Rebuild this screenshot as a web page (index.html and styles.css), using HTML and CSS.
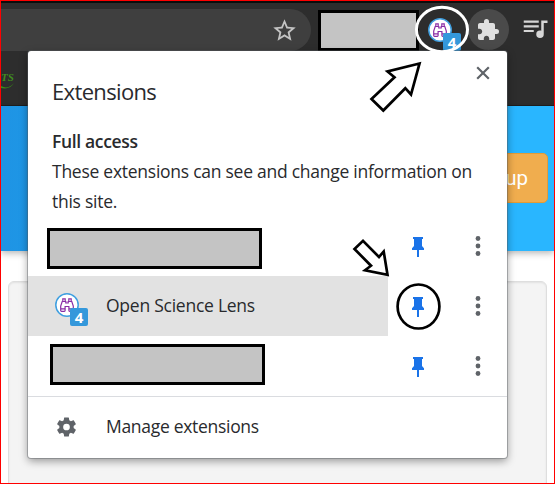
FILE: index.html
```html
<!DOCTYPE html>
<html lang="en">
<head>
<meta charset="utf-8">
<title>Extensions</title>
<link rel="stylesheet" href="styles.css">
</head>
<body>
<svg class="defs" aria-hidden="true">
  <symbol id="pin" viewBox="0 0 12 20"><path d="M1 0h10v2h-1v7l2 2.200V13H7v7H5v-7H0v-1.800L2 9V2H1z"/></symbol>
  <symbol id="dots" viewBox="0 0 6 20"><circle cx="3" cy="2.500" r="2.400"/><circle cx="3" cy="10" r="2.400"/><circle cx="3" cy="17.500" r="2.400"/></symbol>
  <symbol id="lens" viewBox="0 0 24 24">
    <circle cx="12" cy="12" r="11.200" fill="#fff" stroke="#3f9fe0" stroke-width="1.500"/>
    <path d="M7.800 8V5.800h2.400V8M13.800 8V5.800h2.400V8M7.200 8.500h3.600v1.500h2.400V8.500h3.600l1.500 4.500v4.500q0 .8-.8.8h-2.800q-.8 0-.8-.8v-4h-3.800v4q0 .8-.8.8H6.500q-.8 0-.8-.8V13zM6 15.800h4M14 15.800h4" fill="none" stroke="#8a2da5" stroke-width="1.200"/>
  </symbol>
</svg>
<div class="window">
  <header class="toolbar">
    <div class="omnibox">
      <svg class="star" viewBox="0 0 24 24"><path d="M22 9.240l-7.190-.62L12 2 9.190 8.630 2 9.240l5.460 4.730L5.820 21 12 17.270 18.180 21l-1.630-7.030L22 9.240zM12 15.400l-3.760 2.270 1-4.280-3.320-2.880 4.380-.38L12 6.100l1.710 4.040 4.380.38-3.320 2.880 1 4.280L12 15.400z"/></svg>
    </div>
    <div class="redacted redacted-top"></div>
    <div class="ext-icon ext-top"><svg><use href="#lens"/></svg><span class="badge">4</span></div>
    <div class="puzzle"><svg viewBox="0 0 24 24"><path d="M20.500 11H19V7c0-1.100-.9-2-2-2h-4V3.500a2.500 2.500 0 0 0-5 0V5H4c-1.100 0-1.990.9-1.990 2v3.800H3.500c1.490 0 2.700 1.210 2.700 2.700s-1.210 2.700-2.700 2.700H2V20c0 1.100.9 2 2 2h3.800v-1.500c0-1.490 1.210-2.700 2.700-2.700s2.700 1.210 2.700 2.700V22H17c1.100 0 2-.9 2-2v-4h1.500a2.500 2.500 0 0 0 0-5z"/></svg></div>
    <svg class="queue" viewBox="0 0 24 24"><path d="M15 6H3v1.700h12V6zm0 3.800H3v1.700h12V9.800zM3 15.200h8v-1.700H3v1.700zM17 6v8.180c-.31-.11-.65-.18-1-.18a3 3 0 1 0 3 3V8h3V6h-5z"/></svg>
  </header>
  <div class="bookmarks"><span>TS</span><svg viewBox="0 0 14 6"><path d="M0 3q7 4 13-3-4 7-13 5z"/></svg></div>
  <div class="banner"><div class="signup">up</div></div>
  <main class="page"><div class="card"></div></main>
</div>

<section class="popup">
  <div class="head"><h1>Extensions</h1><svg class="close" viewBox="0 0 14 14"><path d="M1.200 1.200l11.600 11.600M12.800 1.200L1.200 12.800"/></svg></div>
  <div class="info">
    <h2>Full access</h2>
    <p><span class="line1">These extensions can see and change information on</span><br><span class="line2">this site.</span></p>
  </div>
  <div class="row">
    <div class="name"><div class="redacted bar"></div></div>
    <svg class="pin"><use href="#pin"/></svg><svg class="dots"><use href="#dots"/></svg>
  </div>
  <div class="row">
    <div class="name active"><div class="ext-icon"><svg><use href="#lens"/></svg><span class="badge">4</span></div><span class="label">Open Science Lens</span></div>
    <svg class="pin"><use href="#pin"/></svg><svg class="dots"><use href="#dots"/></svg>
  </div>
  <div class="row">
    <div class="name"><div class="redacted bar shifted"></div></div>
    <svg class="pin"><use href="#pin"/></svg><svg class="dots"><use href="#dots"/></svg>
  </div>
  <div class="manage">
    <svg class="gear" viewBox="0 0 24 24"><path d="M19.430 12.980c.04-.32.07-.64.07-.98s-.03-.66-.07-.98l2.110-1.650c.19-.15.24-.42.12-.64l-2-3.460c-.12-.22-.39-.3-.61-.22l-2.490 1c-.52-.4-1.080-.73-1.690-.98l-.38-2.650A.488.488 0 0 0 14 2h-4c-.25 0-.46.18-.49.42l-.38 2.650c-.61.25-1.170.59-1.690.98l-2.490-1c-.23-.09-.49 0-.61.22l-2 3.460c-.13.22-.07.49.12.64l2.110 1.650c-.04.32-.07.65-.07.98s.03.66.07.98l-2.110 1.650c-.19.15-.24.42-.12.64l2 3.460c.12.22.39.3.61.22l2.490-1c.52.4 1.080.73 1.690.98l.38 2.650c.03.24.24.42.49.42h4c.25 0 .46-.18.49-.42l.38-2.650c.61-.25 1.170-.59 1.690-.98l2.490 1c.23.09.49 0 .61-.22l2-3.460c.12-.22.07-.49-.12-.64l-2.110-1.650zM12 15.500a3.500 3.500 0 1 1 0-7 3.500 3.500 0 0 1 0 7z"/></svg>
    <span class="label manage-label">Manage extensions</span>
  </div>
</section>

<svg class="annotations" viewBox="0 0 555 484">
  <ellipse cx="442" cy="29.500" rx="25.500" ry="22.200" fill="none" stroke="#fff" stroke-width="3"/>
  <g fill="#fff" stroke="#000" stroke-width="2.700">
    <path d="M419.500 63.500L387.500 71.500 394.500 77.300 371.500 99 383.300 110.500 405.300 88.200 411 94.500z"/>
    <path d="M387.500 274.700L383.700 251.500 379 257 363 240.800 354.500 249 371 265.700 365 270.300z"/>
    <ellipse cx="418.500" cy="306.500" rx="20.900" ry="22" fill="none"/>
  </g>
</svg>
</body>
</html>
```

FILE: styles.css
```css
* { box-sizing: border-box; }
body { margin: 0; width: 555px; height: 484px; overflow: hidden; position: relative; font-family: "Open Sans", "Noto Sans", sans-serif; color: #292a2d; }
svg { display: block; flex: none; }
.defs { position: absolute; width: 0; height: 0; }

.window { width: 555px; height: 484px; border: 1px solid #f00; background: #fff; display: flex; flex-direction: column; overflow: hidden; }
.toolbar { height: 50px; flex: none; background: #2d2d2d; border-top: 2px solid #0c0c0c; padding-top: 6px; display: flex; align-items: flex-start; }
.omnibox { width: 310px; height: 42px; flex: none; background: #3f3f3f; border-radius: 0 21px 21px 0; display: flex; justify-content: flex-end; align-items: center; padding-right: 13px; }
.star { width: 27px; height: 27px; fill: #c4c4c4; }
.redacted { background: #c4c4c4; border: 3px solid #000; flex: none; }
.redacted-top { width: 101px; height: 41px; margin: 1px 0 0 7px; }
.ext-icon { width: 33px; height: 33px; position: relative; flex: none; }
.ext-icon svg { width: 24px; height: 24px; }
.badge { position: absolute; left: 15px; top: 15px; width: 18px; height: 18px; border-radius: 2px; background: #3498db; color: #fff; font: 700 15px/19px "Open Sans", sans-serif; text-align: center; }
.ext-top { margin: 9px 0 0 9px; }
.ext-top .badge { line-height: 18px; }
.puzzle { width: 41px; height: 41px; margin-left: 7px; border-radius: 50%; background: #4a4a4a; display: flex; align-items: center; justify-content: center; flex: none; }
.puzzle svg { width: 24px; height: 24px; fill: #e0e0e0; margin-right: 1px; }
.queue { width: 30px; height: 30px; margin: 4px 0 0 11px; fill: #d6d6d6; }
.bookmarks { height: 55px; flex: none; background: #2d2d2d; border-bottom: 1px solid #202020; padding-top: 20px; color: #3f8a20; font: italic 700 11px/13px "Liberation Serif", serif; }
.bookmarks svg { width: 14px; height: 6px; fill: #399016; margin-top: -1px; }
.banner { height: 145px; flex: none; background: linear-gradient(90deg, #1e94e4, #29b6ff 90%); box-shadow: 0 2px 7px rgba(0,0,0,.3); padding: 47px 6px 0; display: flex; justify-content: flex-end; align-items: flex-start; }
.signup { width: 106px; height: 50px; background: #f0ad4e; border: 1px solid #e39b36; border-radius: 5px; padding: 0 19px; color: #fff; font: 20.500px/48px Roboto, sans-serif; text-align: right; }
.page { padding: 30px 7px 0; height: 300px; flex: none; }
.card { height: 300px; background: #f4f4f4; border: 1px solid #dedede; border-radius: 6px; box-shadow: inset 0 1px 2px rgba(0,0,0,.08); }

.popup { position: absolute; left: 28px; top: 51px; width: 479px; height: 407px; background: #fff; border-radius: 3px; box-shadow: 0 0 0 1px rgba(90,95,100,.4), 0 3px 8px rgba(0,0,0,.4); }
.head { height: 75px; padding: 0 17px 0 24px; display: flex; justify-content: space-between; }
h1, h2, p { margin: 0; font-weight: 400; white-space: nowrap; }
h1 { font-size: 22px; line-height: 81px; letter-spacing: -.65px; }
.close { width: 14px; height: 14px; margin-top: 15px; stroke: #5f6368; stroke-width: 2.200; }
.info { height: 90px; padding-left: 24px; }
h2 { font-size: 17.500px; line-height: 30px; font-weight: 600; letter-spacing: -.35px; }
p, .label { font-size: 17.500px; line-height: 30px; }
.line1, .line2 { letter-spacing: -.26px; }
.row { height: 60px; display: flex; align-items: center; }
.name { width: 360px; height: 60px; display: flex; align-items: center; }
.active { background: #e2e2e2; padding-left: 27px; }
.active .ext-icon { margin-top: 6px; }
.active .label { margin: -2px 0 0 18px; letter-spacing: -.25px; }
.bar { width: 215px; height: 41px; margin: 5px 0 0 19px; }
.shifted { margin: -3px 0 0 22px; }
.pin { width: 12px; height: 20px; margin-left: 24px; margin-top: 2px; fill: #1a73e8; }
.dots { width: 6px; height: 20px; margin-left: 51px; fill: #5f6368; }
.manage { height: 61px; border-top: 1px solid #dadce0; display: flex; align-items: center; padding-left: 27px; }
.gear { width: 23px; height: 24px; fill: #5f6368; }
.manage-label { margin: -2px 0 0 28px; letter-spacing: -.3px; }
.annotations { position: absolute; left: 0; top: 0; width: 555px; height: 484px; pointer-events: none; }
```
